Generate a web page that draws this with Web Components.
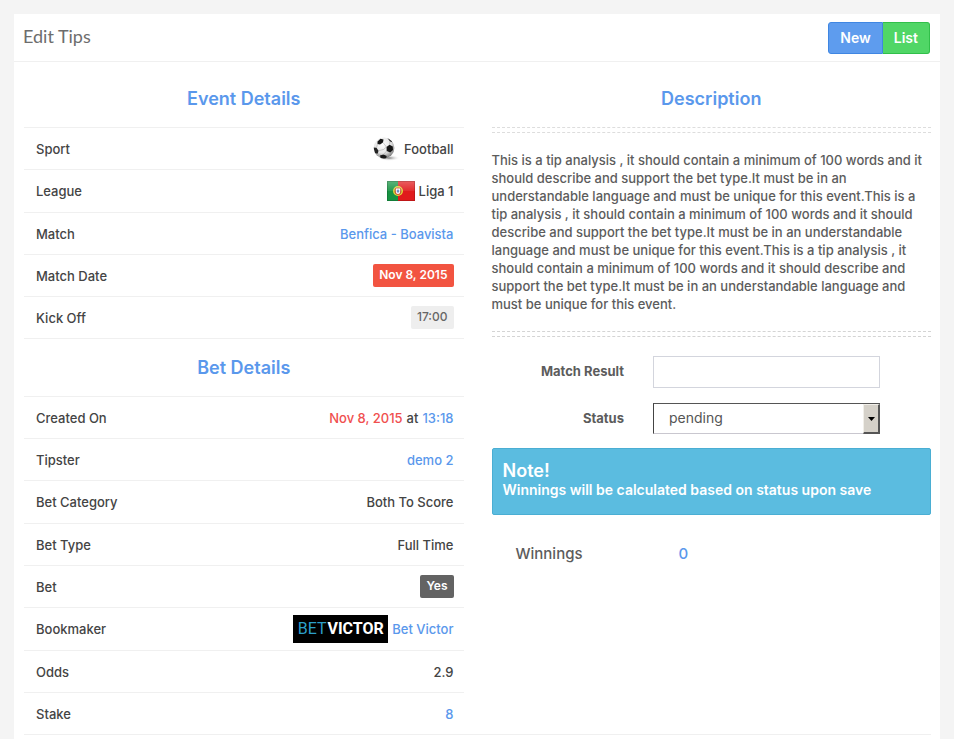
<!DOCTYPE html>
<html lang="en">
<head>
<meta charset="utf-8">
<title>Edit Tips</title>
<style>
  :root { --blue: #5a98ec; --text: #444; --muted: #5c5c5c; --line: #f0f0f0; }
  body { margin: 0; background: #f4f4f4; color: var(--text); font: 500 13px/18px Inter, "Open Sans", sans-serif; }
  a { color: var(--blue); text-decoration: none; }
  .red { color: #f04f4f; }
</style>
</head>
<body>
<tip-panel heading="Edit Tips">
  <button-pair slot="actions"></button-pair>
  <section>
    <section-title>Event Details</section-title>
    <detail-table>
      <div data-label="Sport"><ball-icon></ball-icon> Football</div>
      <div data-label="League" data-tall><flag-icon></flag-icon> Liga 1</div>
      <div data-label="Match"><a href="#match">Benfica - Boavista</a></div>
      <div data-label="Match Date"><tip-badge kind="danger">Nov 8, 2015</tip-badge></div>
      <div data-label="Kick Off"><tip-badge>17:00</tip-badge></div>
    </detail-table>
    <section-title>Bet Details</section-title>
    <detail-table open-end>
      <div data-label="Created On"><span class="red">Nov 8, 2015</span> at <a href="#time">13:18</a></div>
      <div data-label="Tipster"><a href="#tipster">demo 2</a></div>
      <div data-label="Bet Category" data-tall>Both To Score</div>
      <div data-label="Bet Type">Full Time</div>
      <div data-label="Bet"><tip-badge kind="dark">Yes</tip-badge></div>
      <div data-label="Bookmaker" data-tall><bookmaker-logo></bookmaker-logo> <a href="#bookmaker">Bet Victor</a></div>
      <div data-label="Odds">2.9</div>
      <div data-label="Stake"><a href="#stake">8</a></div>
    </detail-table>
  </section>
  <section>
    <section-title>Description</section-title>
    <tip-description>This is a tip analysis , it should contain a minimum of 100 words and it should describe and support the bet type.It must be in an understandable language and must be unique for this event.This is a tip analysis , it should contain a minimum of 100 words and it should describe and support the bet type.It must be in an understandable language and must be unique for this event.This is a tip analysis , it should contain a minimum of 100 words and it should describe and support the bet type.It must be in an understandable language and must be unique for this event.</tip-description>
    <result-form></result-form>
    <info-note heading="Note!">Winnings will be calculated based on status upon save</info-note>
    <winnings-line label="Winnings">0</winnings-line>
  </section>
</tip-panel>

<script>
const define = (name, html, setup) => {
  const template = document.createElement('template');
  template.innerHTML = html;
  customElements.define(name, class extends HTMLElement {
    connectedCallback() {
      if (this.shadowRoot) return;
      const root = this.attachShadow({ mode: 'open' });
      root.append(template.content.cloneNode(true));
      if (setup) setup(this, root);
    }
  });
};
const fill = (attr, selector) => (host, root) => {
  root.querySelector(selector).textContent = host.getAttribute(attr);
};

define('tip-panel', `
<style>
  :host { display: block; min-height: 100vh; box-sizing: border-box; padding: 14px 14px 0; }
  main { background: #fff; min-height: calc(100vh - 14px); }
  header { display: flex; justify-content: space-between; align-items: flex-start; padding: 8px 10px 7px 9px; border-bottom: 1px solid var(--line); }
  h1 { margin: 0; font: 400 18px/28px Lato, sans-serif; color: #6d6d6d; }
  .columns { display: grid; grid-template-columns: 1fr 1fr; gap: 28px; margin: 8px 9px 0 10px; border-bottom: 1px solid var(--line); }
  ::slotted(section) { min-width: 0; }
</style>
<main>
  <header><h1></h1><slot name="actions"></slot></header>
  <div class="columns"><slot></slot></div>
</main>`, fill('heading', 'h1'));

define('button-pair', `
<style>
  :host { display: flex; }
  button { height: 32px; padding: 0 11px; border: 1px solid; color: #fff; font: 600 14px/20px Inter, sans-serif; cursor: pointer; }
  .new { background: #5e9cee; border-color: #3f86e2; border-radius: 3px 0 0 3px; }
  .list { background: #50d666; border-color: #31bf4a; border-radius: 0 3px 3px 0; border-left-width: 0; }
</style>
<button type="button" class="new">New</button><button type="button" class="list">List</button>`);

define('section-title', `
<style>
  :host { display: block; }
  h2 { margin: 0; padding: 18px 0; text-align: center; color: var(--blue); font: 600 18px/21px Inter, sans-serif; }
</style>
<h2><slot></slot></h2>`);

define('detail-table', `
<style>
  :host { display: block; }
  table { width: 100%; border-collapse: separate; border-spacing: 0; border-bottom: 1px solid var(--line); }
  :host([open-end]) table { border-bottom: 0; }
  th, td { height: 41px; padding: 0 12px; border-top: 1px solid var(--line); font-weight: 500; text-align: left; }
  td { padding-right: 10px; text-align: right; }
  .tall th, .tall td { height: 42px; }
  ::slotted(div) { display: flex; align-items: center; justify-content: flex-end; gap: 4px; }
</style>
<table><tbody></tbody></table>`, (host, root) => {
  const body = root.querySelector('tbody');
  [...host.children].forEach((item, i) => {
    const row = body.insertRow();
    if (item.hasAttribute('data-tall')) row.className = 'tall';
    const head = document.createElement('th');
    head.scope = 'row';
    head.textContent = item.dataset.label;
    const slot = document.createElement('slot');
    slot.name = item.slot = 'value-' + i;
    row.append(head);
    row.insertCell().append(slot);
  });
});

define('tip-badge', `
<style>
  :host { display: inline-block; padding: 2px 6px 3px; border-radius: 2px; background: #eee; color: #666; font-size: 12px; }
  :host([kind="danger"]) { background: #f25441; color: #fff; font-weight: 600; }
  :host([kind="dark"]) { background: #636363; color: #fff; font-weight: 600; }
</style>
<slot></slot>`);

define('ball-icon', `
<style>:host { display: block; } svg { display: block; }</style>
<svg width="27" height="26" viewBox="0 0 27 26" aria-hidden="true">
  <defs>
    <radialGradient id="b" cx=".42" cy=".32" r=".7"><stop offset="0" stop-color="#fff"/><stop offset=".6" stop-color="#e4e4e4"/><stop offset="1" stop-color="#777"/></radialGradient>
    <radialGradient id="s"><stop offset="0" stop-color="#777"/><stop offset="1" stop-color="#fff" stop-opacity="0"/></radialGradient>
    <clipPath id="c"><circle cx="11" cy="12" r="10.400"/></clipPath>
  </defs>
  <ellipse cx="16" cy="22" rx="11" ry="3" fill="url(#s)"/>
  <circle cx="11" cy="12" r="10.400" fill="url(#b)"/>
  <g clip-path="url(#c)">
    <path d="M13.500 11l3-2.200 3.300 1.700.2 3.500-2.800 2.500-3.500-1.500z" fill="#151515"/>
    <path d="M4.500 5.500l3-2.700 3 .7-.5 3-3 2-2.500-.5z" fill="#151515"/>
    <path d="M.5 11.500l3 .2 2 3-.8 3-2.700-.4z" fill="#222"/>
    <path d="M7 19.500l3.500-1 3.200 1.500-.7 3H8z" fill="#151515"/>
    <path d="M14.500 2l3.500 1.500 2 3-3-1z" fill="#222"/>
    <path d="M10 6.500l3.500 4.500M4.500 8l-1 3.700M5.500 14.700l5-1.200 3-2.500M4.700 17.700L7 19.500M13.700 15l-3.200 3.500M17 5.500l-.5 3.300" stroke="#aaa" stroke-width=".6" fill="none"/>
  </g>
</svg>`);

define('flag-icon', `
<style>:host { display: block; } svg { display: block; }</style>
<svg width="28" height="20" viewBox="0 0 28 20" role="img" aria-label="Portugal">
  <defs><linearGradient id="g" x2="0" y2="1"><stop offset="0" stop-color="#fff" stop-opacity=".3"/><stop offset=".5" stop-color="#fff" stop-opacity=".08"/><stop offset=".52" stop-color="#fff" stop-opacity="0"/></linearGradient></defs>
  <path fill="#169342" d="M0 0h11v20H0z"/><path fill="#e01a1c" d="M11 0h17v20H11z"/>
  <circle cx="11" cy="10" r="4.300" fill="#a08a30" stroke="#e8d53a" stroke-width="1.300"/>
  <path d="M8.300 7h5.400v4a2.700 2.700 0 0 1-5.400 0z" fill="#d9403f"/>
  <path d="M8.900 7.600h4.200V11a2.100 2.100 0 0 1-4.200 0z" fill="#fff"/>
  <path d="M10.500 8.500h1v3.200h-1zM9.700 9.600h2.600v1H9.700z" fill="#3a62ae"/>
  <path fill="url(#g)" d="M0 0h28v20H0z"/>
  <path fill="none" stroke="#000" stroke-opacity=".15" d="M.5.5h27v19H.5z"/>
</svg>`);

define('bookmaker-logo', `
<style>
  :host { display: flex; align-items: center; justify-content: center; gap: 1px; width: 95px; height: 28px; background: #000; color: #fff; font: 700 16px/28px Roboto, sans-serif; }
  span { color: #2c9fc9; font-weight: 400; }
</style>
<span>BET</span>VICTOR`);

define('tip-description', `
<style>
  :host { display: block; color: var(--muted); }
  p { margin: 18px 0; }
  .rule { height: 4px; border: dashed #ddd; border-width: 1px 0; }
  .rule:last-child { border-color: #d4d4d4; }
</style>
<div class="rule"></div><p><slot></slot></p><div class="rule"></div>`);

define('result-form', `
<style>
  :host { display: block; margin-top: 19px; }
  form { display: grid; gap: 15px; }
  .field { display: grid; grid-template-columns: 4fr 7fr 1fr; align-items: center; }
  label { padding: 0 14px 2px 0; text-align: right; font-weight: 700; color: var(--muted); }
  .control { position: relative; padding: 0 14px 0 15px; }
  input, select { display: block; width: 100%; box-sizing: border-box; margin: 0; border-radius: 0; background: #fff; color: #555; font: 400 14px/20px Inter, sans-serif; }
  input { height: 32px; padding: 0 12px; border: 1px solid #d3d5dd; }
  select { appearance: none; height: 31px; padding: 0 24px 2px 15px; border: 1px solid; border-color: #555 #555 #c9c7cf #444; }
  .arrow { position: absolute; top: 1px; bottom: 0; right: 14px; width: 14px; display: grid; place-items: center; background: #d5d1c9; border: 1px solid; border-width: 1px 2px 2px 1px; border-color: #f1efe9 #555 #555 #f1efe9; pointer-events: none; }
</style>
<form>
  <div class="field"><label for="result">Match Result</label><div class="control"><input id="result" type="text"></div></div>
  <div class="field"><label for="status">Status</label><div class="control">
    <select id="status"><option>pending</option><option>won</option><option>lost</option></select>
    <span class="arrow"><svg width="7" height="4" viewBox="0 0 7 4" aria-hidden="true"><path d="M0 0h7L3.500 4z"/></svg></span>
  </div></div>
</form>`);

define('info-note', `
<style>
  :host { display: block; margin-top: 14px; padding: 12px 10px 15px; border: 1px solid #4aaed3; border-radius: 2px; background: #5bbce0; color: #fff; font-weight: 600; font-size: 14px; }
  h3 { margin: 0; font: 600 18px/20px Inter, sans-serif; }
</style>
<h3></h3><slot></slot>`, fill('heading', 'h3'));

define('winnings-line', `
<style>
  :host { display: grid; grid-template-columns: 163px 1fr; margin-top: 28px; padding: 0 24px; font: 500 15px/22px Inter, sans-serif; color: var(--muted); }
  output { color: var(--blue); }
</style>
<span></span><output><slot></slot></output>`, fill('label', 'span'));
</script>
</body>
</html>
